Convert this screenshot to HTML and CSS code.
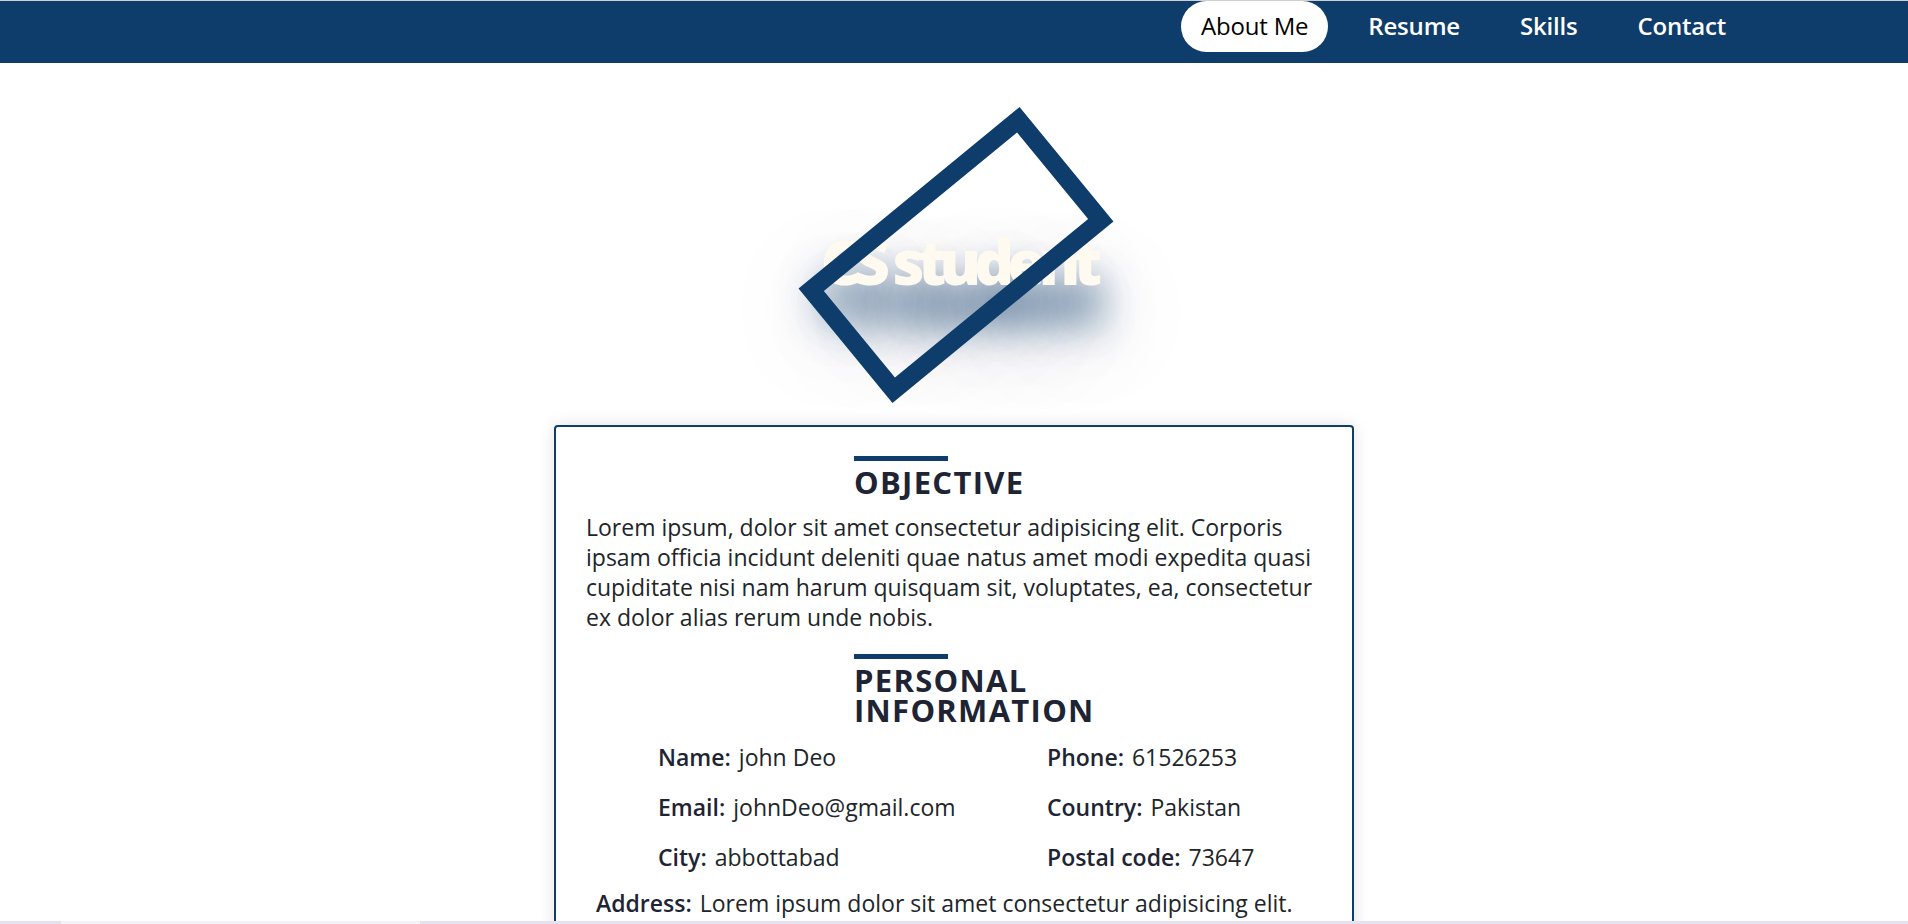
FILE: index.html
```html
<!DOCTYPE html>
<html lang="en">
<head>
<meta charset="utf-8">
<title>CS student</title>
<link rel="stylesheet" href="styles.css">
</head>
<body>
<nav class="navbar">
  <ul class="nav-links">
    <li><a class="nav-link active" href="#">About Me</a></li>
    <li><a class="nav-link" href="#">Resume</a></li>
    <li><a class="nav-link" href="#">Skills</a></li>
    <li><a class="nav-link" href="#">Contact</a></li>
  </ul>
</nav>
<header class="hero">
  <h1 class="hero-title">CS student</h1>
  <div class="hero-frame"></div>
</header>
<main class="card">
  <section class="section">
    <h2 class="section-title">OBJECTIVE</h2>
    <p class="section-text">Lorem ipsum, dolor sit amet consectetur adipisicing elit. Corporis ipsam officia incidunt deleniti quae natus amet modi expedita quasi cupiditate nisi nam harum quisquam sit, voluptates, ea, consectetur ex dolor alias rerum unde nobis.</p>
  </section>
  <section class="section section-info">
    <h2 class="section-title">PERSONAL INFORMATION</h2>
    <div class="info-grid">
      <div class="info-item"><span class="info-label">Name:</span><span class="info-value">john Deo</span></div>
      <div class="info-item"><span class="info-label">Phone:</span><span class="info-value">61526253</span></div>
      <div class="info-item"><span class="info-label">Email:</span><span class="info-value">johnDeo@gmail.com</span></div>
      <div class="info-item"><span class="info-label">Country:</span><span class="info-value">Pakistan</span></div>
      <div class="info-item"><span class="info-label">City:</span><span class="info-value">abbottabad</span></div>
      <div class="info-item"><span class="info-label">Postal code:</span><span class="info-value">73647</span></div>
    </div>
    <div class="info-address"><span class="info-label">Address:</span><span class="info-value">Lorem ipsum dolor sit amet consectetur adipisicing elit.</span></div>
  </section>
</main>
<div class="bottom-strip"></div>
</body>
</html>
```
FILE: styles.css
```css
* {
  box-sizing: border-box;
}

body {
  margin: 0;
  background: #ffffff;
  font-family: "Open Sans", "Noto Sans", sans-serif;
  color: #212529;
}

.navbar {
  height: 63px;
  border-top: 1px solid #cfcfcf;
  background: #0f3d6b;
  display: flex;
  justify-content: flex-end;
  padding-right: 162px;
}

.nav-links {
  display: flex;
  align-items: flex-start;
  gap: 20px;
  list-style: none;
  margin: 0;
  padding: 0;
}

.nav-link {
  display: block;
  height: 51px;
  line-height: 50px;
  padding: 0 20px;
  border-radius: 26px;
  color: #ffffff;
  font-size: 24px;
  font-weight: 600;
  letter-spacing: -0.2px;
  text-decoration: none;
}

.nav-link.active {
  background: #ffffff;
  color: #000000;
  font-weight: 500;
}

.hero {
  position: relative;
  height: 362px;
  display: flex;
  justify-content: center;
  align-items: center;
  padding-top: 34px;
  padding-left: 8px;
}

.hero-title {
  margin: 0;
  font-size: 62px;
  line-height: 1;
  font-weight: 800;
  letter-spacing: -6.8px;
  color: #fffaf0;
  text-shadow: 0 36px 40px rgba(15, 61, 107, 0.9), 0 45px 90px rgba(15, 61, 107, 0.35);
}

.hero-frame {
  position: absolute;
  left: 50%;
  top: 192px;
  width: 286px;
  height: 148px;
  margin-left: 2px;
  border: 18px solid #0f3d6b;
  transform: translate(-50%, -50%) rotate(-39.4deg);
}

.card {
  width: 800px;
  margin: 0 auto;
  border: 2px solid #0f3d6b;
  border-radius: 4px;
  padding: 29px 30px 30px;
  background: #ffffff;
  box-shadow: 0 0 16px rgba(0, 0, 0, 0.12);
}

.section-info {
  margin-top: 22px;
}

.section-title {
  width: 200px;
  margin: 0 auto;
  font-size: 31px;
  line-height: 30px;
  font-weight: 700;
  letter-spacing: 1.3px;
  color: #1e2433;
}

.section-title::before {
  content: "";
  display: block;
  width: 94px;
  height: 5px;
  margin-bottom: 6px;
  background: #0f3d6b;
}

.section-text {
  margin: 15px 0 0;
  font-size: 23px;
  line-height: 30px;
}

.info-grid {
  display: grid;
  grid-template-columns: 389px 1fr;
  margin-top: 7px;
  padding-left: 72px;
}

.info-item {
  padding: 10px 0;
  font-size: 23px;
  line-height: 30px;
}

.info-label {
  font-weight: 600;
  color: #1e2433;
  margin-right: 8px;
}

.info-address {
  padding: 6px 10px;
  font-size: 23px;
  line-height: 30px;
}

.bottom-strip {
  position: fixed;
  left: 0;
  right: 0;
  bottom: 0;
  height: 3px;
  background: linear-gradient(to right, #e6e1f0 61px, #f4f2f8 61px, #f4f2f8 420px, #e6e1f0 420px);
}
```
